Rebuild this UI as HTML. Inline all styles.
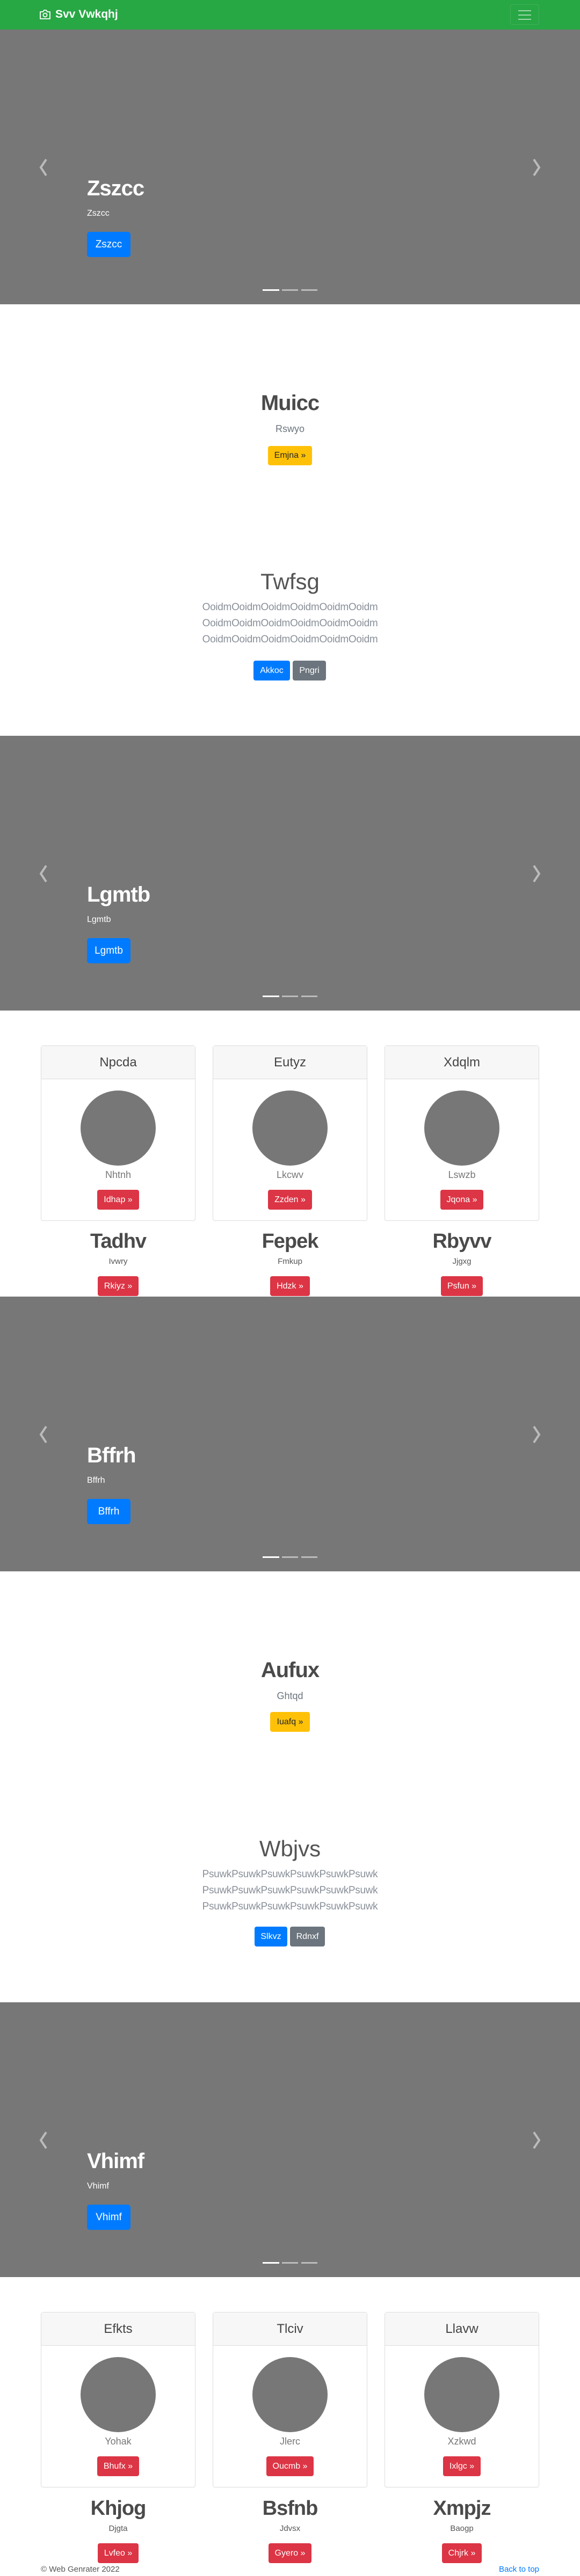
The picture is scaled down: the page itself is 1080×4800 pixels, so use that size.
<!DOCTYPE html>
<html><head><meta charset="utf-8"><style>
*{margin:0;padding:0;box-sizing:border-box}
body{width:1080px;height:4800px;position:relative;background:#fff;font-family:"Liberation Sans",sans-serif;overflow:hidden}
.a{position:absolute}
.nav{left:0;top:0;width:1080px;height:55px;background:#28a745}
.hero{left:0;width:1080px;height:512px;background:#777}
.ht{left:162px;color:#fff;font-size:40px;font-weight:bold;line-height:48px;letter-spacing:-1px}
.hs{left:162px;color:#fff;font-size:16px;line-height:24px}
.hb{left:162px;width:81px;height:47px;background:#007bff;color:#fff;border-radius:5px;font-size:19px;line-height:47px;text-align:center}
.ind{height:3px;width:31px}
.c{left:0;width:1080px;text-align:center}
.jt{font-size:40px;font-weight:bold;line-height:48px;color:#4a4a4a;letter-spacing:-1px}
.js{font-size:18px;line-height:24px;color:#6c757d}
.btn{display:inline-block;border-radius:4px;font-size:16px;text-align:center;color:#fff}
.lt{font-size:42px;line-height:48px;color:#555;font-weight:normal}
.lp{font-size:19px;line-height:30px;color:#8a9099;letter-spacing:-0.3px}
.card{width:288px;height:327px;border:1px solid #ddd;border-radius:4px;background:#fff}
.ch{left:0;top:0;width:286px;height:62px;background:#f7f7f7;border-bottom:1px solid #ddd;font-size:24px;line-height:62px;text-align:center;color:#444}
.cir{width:140px;height:140px;border-radius:50%;background:#777;left:73px;top:83px}
.cn{left:0;width:286px;text-align:center;font-size:18px;color:#777;top:228px;line-height:24px}
.red{background:#dc3545;height:37px;line-height:37px;padding:0 12px}
.col{width:320px;text-align:center}
.bt{font-size:38px;font-weight:bold;line-height:48px;color:#4a4a4a;letter-spacing:-1px}
.bs{font-size:15px;color:#555;line-height:20px}
</style></head><body>

<div class="a nav">
<svg class="a" style="left:73px;top:17px" width="22" height="20" viewBox="0 0 22 20"><path d="M2 5h5l2-3h4l2 3h5v13H2z" fill="none" stroke="#fff" stroke-width="1.8" stroke-linejoin="round"/><circle cx="11" cy="11" r="3.5" fill="none" stroke="#fff" stroke-width="1.8"/></svg>
<div class="a" style="left:103px;top:13px;color:#fff;font-weight:bold;font-size:21px;line-height:28px">Svv Vwkqhj</div>
<div class="a" style="left:950px;top:8px;width:54px;height:38px;border:1px solid rgba(255,255,255,.12);border-radius:4px"></div>
<div class="a" style="left:965px;top:19px;width:24px;height:2px;background:rgba(255,255,255,.55)"></div>
<div class="a" style="left:965px;top:27px;width:24px;height:2px;background:rgba(255,255,255,.55)"></div>
<div class="a" style="left:965px;top:35px;width:24px;height:2px;background:rgba(255,255,255,.55)"></div>
</div>

<!-- HERO TEMPLATE offsets: 55,1371,2416,3731 -->
<div class="a hero" style="top:55px"></div>
<div class="a hero" style="top:1371px"></div>
<div class="a hero" style="top:2416px"></div>
<div class="a hero" style="top:3731px"></div>

<svg class="a" style="left:0;top:0" width="1080" height="4800">
<g fill="none" stroke="#bbb" stroke-width="4">
<polyline points="86,297 76,312 86,327"/><polyline points="994,297 1004,312 994,327"/>
<polyline points="86,1613 76,1628 86,1643"/><polyline points="994,1613 1004,1628 994,1643"/>
<polyline points="86,2658 76,2673 86,2688"/><polyline points="994,2658 1004,2673 994,2688"/>
<polyline points="86,3973 76,3988 86,4003"/><polyline points="994,3973 1004,3988 994,4003"/>
</g>
<g fill="#fff"><rect x="489" y="539" width="31" height="3"/><rect x="489" y="1855" width="31" height="3"/><rect x="489" y="2900" width="31" height="3"/><rect x="489" y="4215" width="31" height="3"/></g>
<g fill="#bbb"><rect x="525" y="539" width="30" height="3"/><rect x="561" y="539" width="30" height="3"/>
<rect x="525" y="1855" width="30" height="3"/><rect x="561" y="1855" width="30" height="3"/>
<rect x="525" y="2900" width="30" height="3"/><rect x="561" y="2900" width="30" height="3"/>
<rect x="525" y="4215" width="30" height="3"/><rect x="561" y="4215" width="30" height="3"/></g>
</svg>

<div class="a ht" style="top:327px">Zszcc</div><div class="a hs" style="top:386px">Zszcc</div><div class="a hb" style="top:432px">Zszcc</div>
<div class="a ht" style="top:1643px">Lgmtb</div><div class="a hs" style="top:1702px">Lgmtb</div><div class="a hb" style="top:1748px">Lgmtb</div>
<div class="a ht" style="top:2688px">Bffrh</div><div class="a hs" style="top:2747px">Bffrh</div><div class="a hb" style="top:2793px">Bffrh</div>
<div class="a ht" style="top:4003px">Vhimf</div><div class="a hs" style="top:4062px">Vhimf</div><div class="a hb" style="top:4108px">Vhimf</div>

<!-- jumbotron 1 -->
<div class="a c jt" style="top:727px">Muicc</div>
<div class="a c js" style="top:787px">Rswyo</div>
<div class="a c" style="top:831px"><span class="btn" style="background:#ffc107;color:#212529;width:82px;height:36px;line-height:36px">Emjna »</span></div>
<div class="a c lt" style="top:1060px">Twfsg</div>
<div class="a c lp" style="top:1117px">OoidmOoidmOoidmOoidmOoidmOoidm<br>OoidmOoidmOoidmOoidmOoidmOoidm<br>OoidmOoidmOoidmOoidmOoidmOoidm</div>
<div class="a" style="left:472px;top:1231px"><span class="btn" style="background:#007bff;width:68px;height:37px;line-height:37px">Akkoc</span></div>
<div class="a" style="left:545px;top:1231px"><span class="btn" style="background:#6c757d;width:62px;height:37px;line-height:37px">Pngri</span></div>

<!-- jumbotron 2 -->
<div class="a c jt" style="top:3088px">Aufux</div>
<div class="a c js" style="top:3148px">Ghtqd</div>
<div class="a c" style="top:3190px"><span class="btn" style="background:#ffc107;color:#212529;width:74px;height:37px;line-height:37px">Iuafq »</span></div>
<div class="a c lt" style="top:3421px">Wbjvs</div>
<div class="a c lp" style="top:3478px">PsuwkPsuwkPsuwkPsuwkPsuwkPsuwk<br>PsuwkPsuwkPsuwkPsuwkPsuwkPsuwk<br>PsuwkPsuwkPsuwkPsuwkPsuwkPsuwk</div>
<div class="a" style="left:474px;top:3590px"><span class="btn" style="background:#007bff;width:61px;height:37px;line-height:37px">Slkvz</span></div>
<div class="a" style="left:540px;top:3590px"><span class="btn" style="background:#6c757d;width:65px;height:37px;line-height:37px">Rdnxf</span></div>

<!-- cards 1 -->
<div class="a card" style="left:76px;top:1948px"><div class="a ch">Npcda</div><div class="a cir"></div><div class="a cn">Nhtnh</div><div class="a" style="left:0;width:286px;top:268px;text-align:center"><span class="btn red">Idhap »</span></div></div>
<div class="a card" style="left:396px;top:1948px"><div class="a ch">Eutyz</div><div class="a cir"></div><div class="a cn">Lkcwv</div><div class="a" style="left:0;width:286px;top:268px;text-align:center"><span class="btn red">Zzden »</span></div></div>
<div class="a card" style="left:716px;top:1948px"><div class="a ch">Xdqlm</div><div class="a cir"></div><div class="a cn">Lswzb</div><div class="a" style="left:0;width:286px;top:268px;text-align:center"><span class="btn red">Jqona »</span></div></div>
<div class="a col" style="left:60px;top:2289px"><div class="bt">Tadhv</div><div class="bs" style="margin-top:4px">Ivwry</div><span class="btn red" style="margin-top:17px">Rkiyz »</span></div>
<div class="a col" style="left:380px;top:2289px"><div class="bt">Fepek</div><div class="bs" style="margin-top:4px">Fmkup</div><span class="btn red" style="margin-top:17px">Hdzk »</span></div>
<div class="a col" style="left:700px;top:2289px"><div class="bt">Rbyvv</div><div class="bs" style="margin-top:4px">Jjgxg</div><span class="btn red" style="margin-top:17px">Psfun »</span></div>

<!-- cards 2 -->
<div class="a card" style="left:76px;top:4308px"><div class="a ch">Efkts</div><div class="a cir"></div><div class="a cn">Yohak</div><div class="a" style="left:0;width:286px;top:268px;text-align:center"><span class="btn red">Bhufx »</span></div></div>
<div class="a card" style="left:396px;top:4308px"><div class="a ch">Tlciv</div><div class="a cir"></div><div class="a cn">Jlerc</div><div class="a" style="left:0;width:286px;top:268px;text-align:center"><span class="btn red">Oucmb »</span></div></div>
<div class="a card" style="left:716px;top:4308px"><div class="a ch">Llavw</div><div class="a cir"></div><div class="a cn">Xzkwd</div><div class="a" style="left:0;width:286px;top:268px;text-align:center"><span class="btn red">Ixlgc »</span></div></div>
<div class="a col" style="left:60px;top:4650px"><div class="bt">Khjog</div><div class="bs" style="margin-top:4px">Djgta</div><span class="btn red" style="margin-top:17px">Lvfeo »</span></div>
<div class="a col" style="left:380px;top:4650px"><div class="bt">Bsfnb</div><div class="bs" style="margin-top:4px">Jdvsx</div><span class="btn red" style="margin-top:17px">Gyero »</span></div>
<div class="a col" style="left:700px;top:4650px"><div class="bt">Xmpjz</div><div class="bs" style="margin-top:4px">Baogp</div><span class="btn red" style="margin-top:17px">Chjrk »</span></div>

<div class="a" style="left:76px;top:4778px;font-size:15px;color:#555;line-height:20px">© Web Genrater 2022</div>
<div class="a" style="left:904px;width:100px;text-align:right;top:4778px;font-size:15px;color:#007bff;line-height:20px">Back to top</div>
</body></html>
